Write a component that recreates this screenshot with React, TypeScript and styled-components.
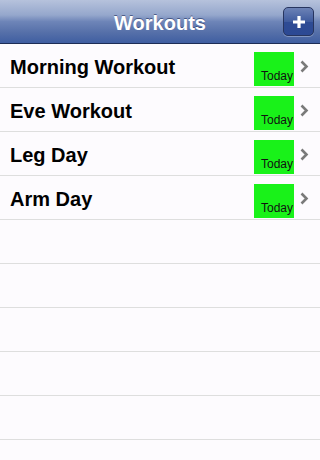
import React from "react";
import { styled, createGlobalStyle } from "styled-components";

const workouts = ["Morning Workout", "Eve Workout", "Leg Day", "Arm Day"];
const emptyRows = 5;

export default function App() {
  return (
    <>
      <GlobalStyle />
      <Screen>
        <NavBar>
          <NavTitle>Workouts</NavTitle>
          <AddButton aria-label="Add workout">
            <svg width="14" height="14" viewBox="0 0 14 14">
              <path d="M7 1v12M1 7h12" stroke="#fff" strokeWidth="3.2" />
            </svg>
          </AddButton>
        </NavBar>
        <List>
          {workouts.map((name) => (
            <Row key={name}>
              <RowTitle>{name}</RowTitle>
              <DateBadge>Today</DateBadge>
              <Chevron width="9" height="13" viewBox="0 0 9 13">
                <path d="M1.5 1.5l5 5-5 5" fill="none" stroke="#7a7a7a" strokeWidth="2.6" />
              </Chevron>
            </Row>
          ))}
          {Array.from({ length: emptyRows }).map((_, i) => (
            <Row key={"empty" + i} />
          ))}
        </List>
      </Screen>
    </>
  );
}

const GlobalStyle = createGlobalStyle`
  body {
    margin: 0;
    background: #fdfbfe;
    font-family: "Liberation Sans", Arial, sans-serif;
  }
`;

// whole screen
const Screen = styled.div`
  width: 320px;
  height: 460px;
  overflow: hidden;
  background: #fdfbfe;
`;

// top navigation bar
const NavBar = styled.div`
  position: relative;
  height: 44px;
  box-sizing: border-box;
  padding-top: 3px;
  display: flex;
  align-items: center;
  justify-content: center;
  background: linear-gradient(
    to bottom,
    #b6c2dc 0%,
    #95a7cc 35%,
    #6e85b8 50%,
    #5670a9 75%,
    #3f5ea1 100%
  );
  border-bottom: 1px solid #1d2d55;
`;

const NavTitle = styled.h1`
  margin: 0;
  color: #fff;
  font-size: 20px;
  font-weight: bold;
  text-shadow: 0 -1px 0 rgba(30, 45, 90, 0.6);
`;

// the + button sits over the bar
const AddButton = styled.button`
  position: absolute;
  right: 6px;
  top: 7px;
  width: 31px;
  height: 29px;
  padding: 0;
  display: flex;
  align-items: center;
  justify-content: center;
  border: 1px solid #27355f;
  border-radius: 5px;
  background: linear-gradient(to bottom, #6c82b6 0%, #3f5b9e 50%, #2e4b94 51%, #2c4994 100%);
  box-shadow: 0 1px 0 rgba(255, 255, 255, 0.3);
`;

const List = styled.div`
  display: flex;
  flex-direction: column;
`;

const Row = styled.div`
  height: 43px;
  display: flex;
  align-items: center;
  padding: 0 0 0 10px;
  border-bottom: 1px solid #dedede;
`;

const RowTitle = styled.span`
  flex: 1;
  padding-top: 3px;
  font-size: 20px;
  font-weight: bold;
  color: #000;
`;

const DateBadge = styled.span`
  align-self: flex-end;
  width: 40px;
  height: 34px;
  margin-bottom: 1px;
  box-sizing: border-box;
  padding: 0 0 3px 7px;
  display: flex;
  align-items: flex-end;
  background: #19f219;
  color: #111;
  font-size: 12px;
  line-height: 14px;
`;

const Chevron = styled.svg`
  margin: 0 11px 0 6px;
  position: relative;
  top: 1px;
`;
